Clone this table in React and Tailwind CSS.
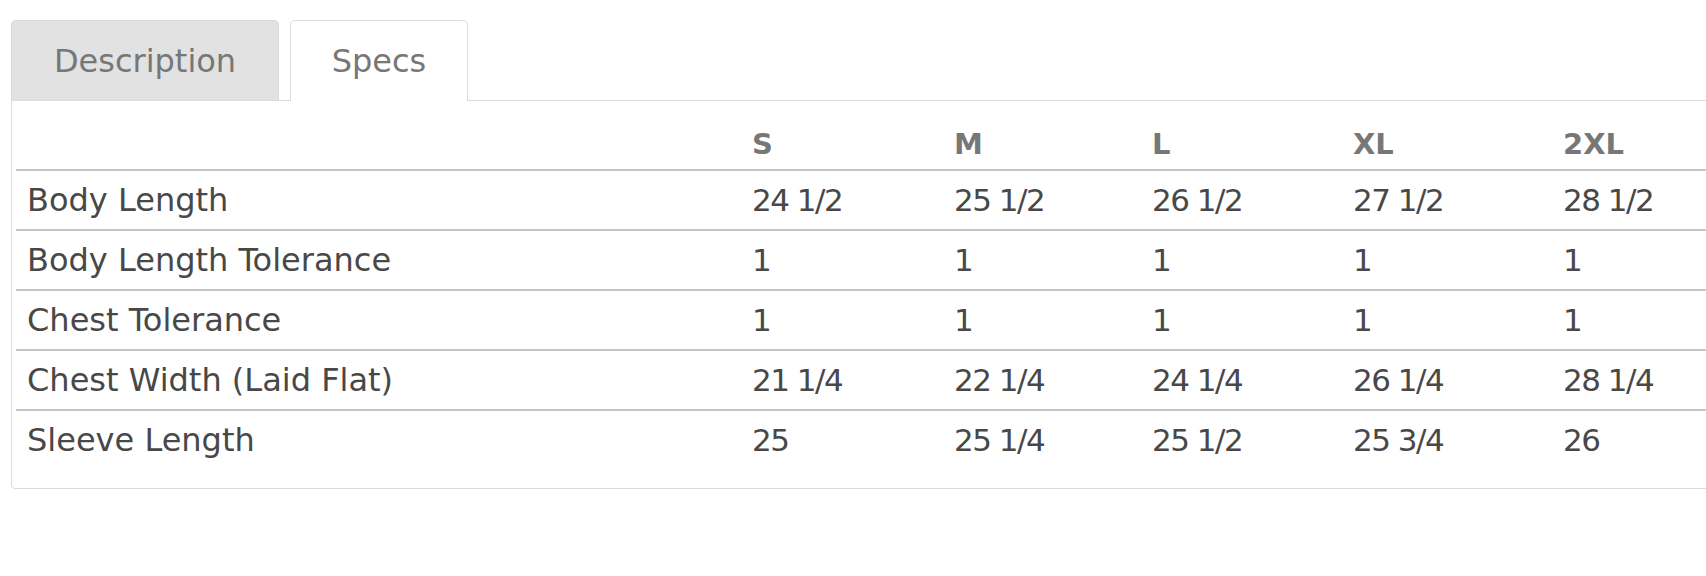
import React from "react";

const sizes = ["S", "M", "L", "XL", "2XL"];
const rows = [
  ["Body Length", "24 1/2", "25 1/2", "26 1/2", "27 1/2", "28 1/2"],
  ["Body Length Tolerance", "1", "1", "1", "1", "1"],
  ["Chest Tolerance", "1", "1", "1", "1", "1"],
  ["Chest Width (Laid Flat)", "21 1/4", "22 1/4", "24 1/4", "26 1/4", "28 1/4"],
  ["Sleeve Length", "25", "25 1/4", "25 1/2", "25 3/4", "26"],
];

const font = { fontFamily: '"DejaVu Sans", "Open Sans", sans-serif' };

export default function App() {
  return (
    <div className="w-full h-[576px] overflow-hidden bg-white pl-[11px] pt-[20px]" style={font}>
      <div className="flex items-end gap-[11px] relative z-10">
        <div className="w-[268px] h-[80px] bg-[#e2e2e2] border border-[#d9d9d9] border-b-0 rounded-t-[5px] flex items-center justify-center text-[32px] leading-none text-[#777]">
          Description
        </div>
        <div className="w-[178px] h-[81px] -mb-px bg-white border border-[#dcdcdc] border-b-0 rounded-t-[5px] flex items-center justify-center text-[32px] leading-none text-[#777]">
          Specs
        </div>
      </div>
      <div className="w-[1760px] border border-[#dcdcdc] rounded-b-[4px] pl-[4px] pb-[19px]">
        <div className="grid grid-cols-[725px_202px_198px_201px_210px_210px] h-[68px] items-end pb-[10px]">
          <div />
          {sizes.map((s) => (
            <div key={s} className="pl-[11px] text-[29px] leading-none font-bold text-[#777]">
              {s}
            </div>
          ))}
        </div>
        {rows.map((r) => (
          <div
            key={r[0]}
            className="grid grid-cols-[725px_202px_198px_201px_210px_210px] h-[60px] items-center border-t-2 border-[#c4c4c4]"
          >
            {r.map((c, i) =>
              i === 0 ? (
                <div key={i} className="pl-[11px] text-[32px] leading-none text-[#484848]">
                  {c}
                </div>
              ) : (
                <div key={i} className="pl-[11px] text-[31px] leading-none tracking-[-1.5px] text-[#484848]">
                  {c}
                </div>
              )
            )}
          </div>
        ))}
      </div>
    </div>
  );
}
